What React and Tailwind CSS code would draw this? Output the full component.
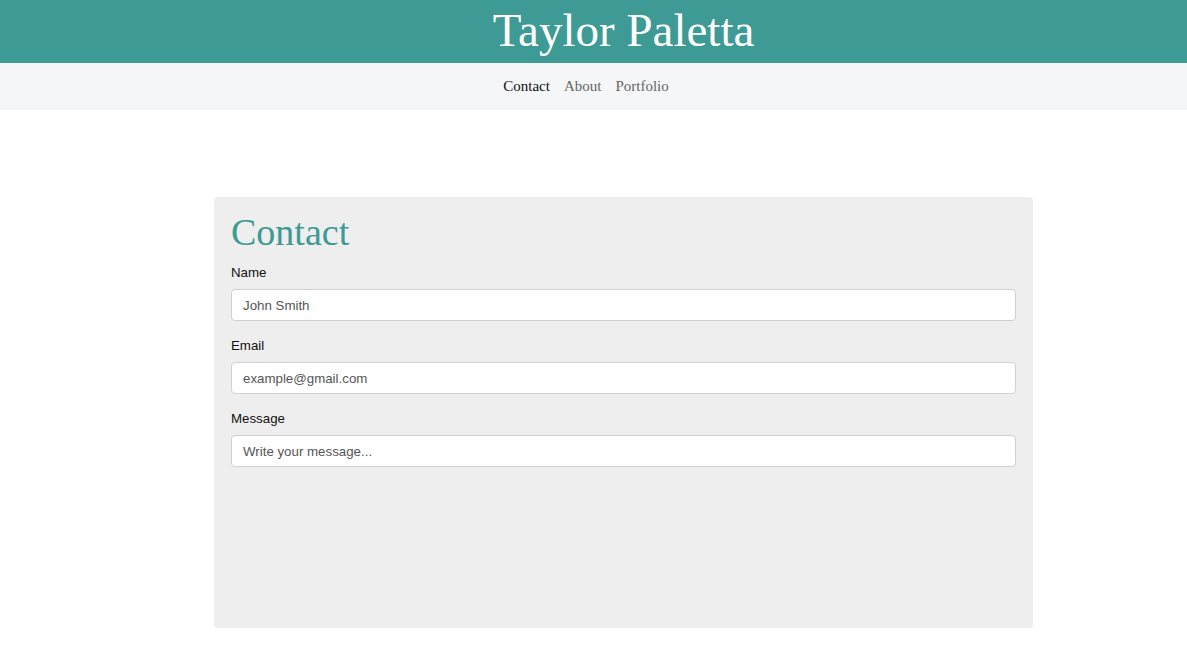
export default function App() {
  return (
    <div className="min-h-screen bg-white">
      <header className="h-[63px] bg-[#3d9a94] flex items-center justify-center pl-[60px]">
        <h1 className="text-[47px] leading-none text-white font-['Liberation_Serif',serif] pb-[2px]">Taylor Paletta</h1>
      </header>
      <nav className="h-[47px] bg-[#f5f6f8] flex items-center justify-center gap-[14px] pr-[15px] text-[15px] font-['Liberation_Serif',serif]">
        <a className="text-[#111]">Contact</a>
        <a className="text-[#666]">About</a>
        <a className="text-[#666]">Portfolio</a>
      </nav>
      <main className="pt-[87px] pl-[214px]">
        <section className="w-[819px] h-[431px] bg-[#eeeeee] rounded-[4px] px-[17px] pt-[13px]">
          <h2 className="text-[38px] leading-[44px] text-[#3d9a94] font-['Liberation_Serif',serif] mb-[8px]">Contact</h2>
          {[
            ['Name', 'John Smith'],
            ['Email', 'example@gmail.com'],
            ['Message', 'Write your message...'],
          ].map(([label, ph]) => (
            <div key={label} className="mb-[14px] font-['Liberation_Sans',Arial,sans-serif]">
              <label className="block text-[13.3px] leading-[21px] text-[#111] mb-[6px]">{label}</label>
              <input
                className="block w-full h-[32px] bg-white border border-[#d0d0d0] rounded-[4px] px-[11px] text-[13.3px] text-[#555] placeholder:text-[#555] outline-none"
                placeholder={ph}
              />
            </div>
          ))}
        </section>
      </main>
    </div>
  )
}
